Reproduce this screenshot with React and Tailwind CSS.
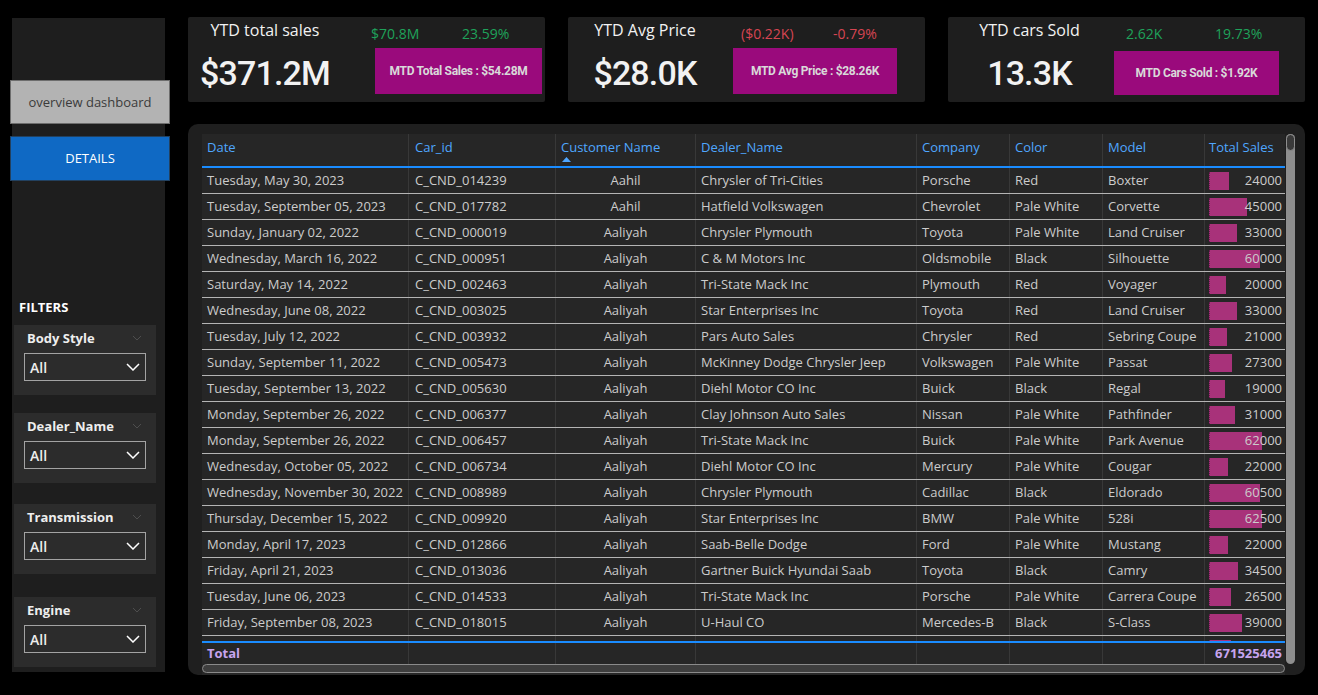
import React from "react";

const rows = [
  ["Tuesday, May 30, 2023", "C_CND_014239", "Aahil", "Chrysler of Tri-Cities", "Porsche", "Red", "Boxter", 24000],
  ["Tuesday, September 05, 2023", "C_CND_017782", "Aahil", "Hatfield Volkswagen", "Chevrolet", "Pale White", "Corvette", 45000],
  ["Sunday, January 02, 2022", "C_CND_000019", "Aaliyah", "Chrysler Plymouth", "Toyota", "Pale White", "Land Cruiser", 33000],
  ["Wednesday, March 16, 2022", "C_CND_000951", "Aaliyah", "C & M Motors Inc", "Oldsmobile", "Black", "Silhouette", 60000],
  ["Saturday, May 14, 2022", "C_CND_002463", "Aaliyah", "Tri-State Mack Inc", "Plymouth", "Red", "Voyager", 20000],
  ["Wednesday, June 08, 2022", "C_CND_003025", "Aaliyah", "Star Enterprises Inc", "Toyota", "Red", "Land Cruiser", 33000],
  ["Tuesday, July 12, 2022", "C_CND_003932", "Aaliyah", "Pars Auto Sales", "Chrysler", "Red", "Sebring Coupe", 21000],
  ["Sunday, September 11, 2022", "C_CND_005473", "Aaliyah", "McKinney Dodge Chrysler Jeep", "Volkswagen", "Pale White", "Passat", 27300],
  ["Tuesday, September 13, 2022", "C_CND_005630", "Aaliyah", "Diehl Motor CO Inc", "Buick", "Black", "Regal", 19000],
  ["Monday, September 26, 2022", "C_CND_006377", "Aaliyah", "Clay Johnson Auto Sales", "Nissan", "Pale White", "Pathfinder", 31000],
  ["Monday, September 26, 2022", "C_CND_006457", "Aaliyah", "Tri-State Mack Inc", "Buick", "Pale White", "Park Avenue", 62000],
  ["Wednesday, October 05, 2022", "C_CND_006734", "Aaliyah", "Diehl Motor CO Inc", "Mercury", "Pale White", "Cougar", 22000],
  ["Wednesday, November 30, 2022", "C_CND_008989", "Aaliyah", "Chrysler Plymouth", "Cadillac", "Black", "Eldorado", 60500],
  ["Thursday, December 15, 2022", "C_CND_009920", "Aaliyah", "Star Enterprises Inc", "BMW", "Pale White", "528i", 62500],
  ["Monday, April 17, 2023", "C_CND_012866", "Aaliyah", "Saab-Belle Dodge", "Ford", "Pale White", "Mustang", 22000],
  ["Friday, April 21, 2023", "C_CND_013036", "Aaliyah", "Gartner Buick Hyundai Saab", "Toyota", "Black", "Camry", 34500],
  ["Tuesday, June 06, 2023", "C_CND_014533", "Aaliyah", "Tri-State Mack Inc", "Porsche", "Pale White", "Carrera Coupe", 26500],
  ["Friday, September 08, 2023", "C_CND_018015", "Aaliyah", "U-Haul CO", "Mercedes-B", "Black", "S-Class", 39000],
  ["", "", "", "", "", "", "", 26000, true],
];

const SEP = "border-r border-[#383838]";

function Chevron({ className, stroke = "#ffffff", w = 14, h = 8, sw = 1.5 }) {
  return (
    <svg width={w} height={h} viewBox={`0 0 ${w} ${h}`} className={className} fill="none">
      <polyline points={`1,1 ${w / 2},${h - 1} ${w - 1},1`} stroke={stroke} strokeWidth={sw} />
    </svg>
  );
}

function Filter({ label, mt }) {
  return (
    <div className={`${mt} ml-[2px] w-[142px] h-[70px] bg-[#2c2c2c] px-[10px] shrink-0`}>
      <div className="pt-[4px] flex items-center justify-between pl-[3px] pr-[4px]">
        <span className="text-[13px] leading-[18px] font-bold text-[#eeeeee]">{label}</span>
        <Chevron w={10} h={6} stroke="#4e4e4e" sw={1} />
      </div>
      <div className="mt-[6px] w-[122px] h-[28px] border-[1.5px] border-[#a3a3a3] flex items-center justify-between pl-[5px] pr-[5px]">
        <span className="text-[14px] font-semibold text-[#ededed]">All</span>
        <Chevron />
      </div>
    </div>
  );
}

function Kpi({ title, big, n1, n2, color, box, leftW, rightMl, numPl, numW, boxW, boxH, boxMt }) {
  return (
    <div className="h-[85px] bg-[#1e1e1e] rounded-[2px] flex">
      <div className={`${leftW} flex flex-col items-center shrink-0`}>
        <div className="pt-[1px] text-[16px] leading-[24px] text-[#f2f2f2]">{title}</div>
        <div className="mt-[11px] text-[34px] leading-[40px] font-medium tracking-tight font-['Roboto',sans-serif] text-[#f2f2f2]">
          {big}
        </div>
      </div>
      <div className={`${rightMl} flex flex-col`}>
        <div className={`pt-[7px] ${numPl} flex text-[14px] leading-[20px] ${color}`}>
          <span className={numW}>{n1}</span>
          <span>{n2}</span>
        </div>
        <div
          className={`${boxMt} ${boxW} ${boxH} bg-[#9a0a7c] flex items-center justify-center text-[12px] font-bold font-['Roboto',sans-serif] tracking-tight text-[#d9d9d9]`}
        >
          {box}
        </div>
      </div>
    </div>
  );
}

function Row({ r }) {
  const w = (r[7] / 62500) * 53;
  const partial = r[8];
  return (
    <div className="flex h-[26px] border-b border-[#b4b4b4] text-[13px] leading-[25px] text-[#cccccc] shrink-0">
      <div className={`w-[207px] shrink-0 pl-[5px] whitespace-nowrap overflow-hidden ${SEP}`}>{r[0]}</div>
      <div className={`w-[147px] shrink-0 pl-[6px] whitespace-nowrap overflow-hidden ${SEP}`}>{r[1]}</div>
      <div className={`w-[140px] shrink-0 text-center whitespace-nowrap overflow-hidden ${SEP}`}>{r[2]}</div>
      <div className={`w-[221px] shrink-0 pl-[5px] whitespace-nowrap overflow-hidden ${SEP}`}>{r[3]}</div>
      <div className={`w-[93px] shrink-0 pl-[5px] whitespace-nowrap overflow-hidden ${SEP}`}>{r[4]}</div>
      <div className={`w-[93px] shrink-0 pl-[5px] whitespace-nowrap overflow-hidden ${SEP}`}>{r[5]}</div>
      <div className={`w-[102px] shrink-0 pl-[5px] whitespace-nowrap overflow-hidden ${SEP}`}>{r[6]}</div>
      <div className="relative w-[80px] shrink-0 text-right pr-[3px]">
        <div
          className="absolute left-[4px] top-[4px] h-[18px] bg-[#a8327a] border-l border-dotted border-[#6a1a4f]"
          style={{ width: `${w}px` }}
        />
        {!partial && <span className="relative">{r[7]}</span>}
      </div>
    </div>
  );
}

export default function App() {
  return (
    <div className="w-[1318px] h-[695px] bg-black flex overflow-hidden font-['Open_Sans',sans-serif]">
      {/* Sidebar */}
      <div className="ml-[12px] mt-[18px] w-[153px] h-[654px] bg-[#1e1e1e] flex flex-col shrink-0">
        <div className="mt-[62px] -ml-[2px] w-[160px] h-[44px] shrink-0 bg-[#b3b3b3] border border-[#6d6d6d] flex items-center justify-center pt-[2px] text-[13px] text-[#3b3b3b]">
          overview dashboard
        </div>
        <div className="mt-[12px] -ml-[2px] w-[160px] h-[45px] shrink-0 bg-[#0f69c4] border border-[#23415f] flex items-center justify-center text-[13px] text-white">
          DETAILS
        </div>
        <div className="mt-[117px] ml-[7px] text-[13px] font-bold leading-[18px] text-white">FILTERS</div>
        <Filter label="Body Style" mt="mt-[9px]" />
        <Filter label="Dealer_Name" mt="mt-[18px]" />
        <Filter label="Transmission" mt="mt-[21px]" />
        <Filter label="Engine" mt="mt-[23px]" />
      </div>

      {/* Main */}
      <div className="ml-[23px] mt-[17px] w-[1117px] flex flex-col shrink-0">
        <div className="grid grid-cols-3 gap-x-[23px]">
          <Kpi
            title="YTD total sales"
            big="$371.2M"
            n1="$70.8M"
            n2="23.59%"
            color="text-[#1fa25a]"
            box="MTD Total Sales : $54.28M"
            leftW="w-[154px]"
            rightMl="ml-[29px]"
            numPl="pl-0"
            numW="w-[91px]"
            boxW="w-[167px] ml-[4px]"
            boxH="h-[46px]"
            boxMt="mt-[4px]"
          />
          <Kpi
            title="YTD Avg Price"
            big="$28.0K"
            n1="($0.22K)"
            n2="-0.79%"
            color="text-[#d64552]"
            box="MTD Avg Price : $28.26K"
            leftW="w-[154px]"
            rightMl="ml-[11px]"
            numPl="pl-[8px]"
            numW="w-[92px]"
            boxW="w-[164px]"
            boxH="h-[46px]"
            boxMt="mt-[4px]"
          />
          <Kpi
            title="YTD cars Sold"
            big="13.3K"
            n1="2.62K"
            n2="19.73%"
            color="text-[#1fa25a]"
            box="MTD Cars Sold : $1.92K"
            leftW="w-[163px]"
            rightMl="ml-[3px]"
            numPl="pl-[12px]"
            numW="w-[89px]"
            boxW="w-[165px]"
            boxH="h-[44px]"
            boxMt="mt-[7px]"
          />
        </div>

        {/* Table panel */}
        <div className="mt-[22px] h-[551px] rounded-[10px] bg-[#1f1f1f] pl-[14px] pr-[10px] pt-[10px] flex">
          <div className="w-[1083px] flex flex-col bg-[#262626] shrink-0">
            {/* Header */}
            <div className="flex h-[34px] border-b-2 border-[#1a8cff] text-[13px] leading-[18px] text-[#4fa6ff] shrink-0">
              <div className={`w-[207px] shrink-0 pl-[5px] pt-[4px] ${SEP}`}>Date</div>
              <div className={`w-[147px] shrink-0 pl-[6px] pt-[4px] ${SEP}`}>Car_id</div>
              <div className={`w-[140px] shrink-0 pl-[5px] pt-[4px] ${SEP}`}>
                <div>Customer Name</div>
                <svg width="9" height="5" viewBox="0 0 9 5" className="ml-[1px] mt-[1px]">
                  <polygon points="0,5 4.5,0 9,5" fill="#4fa6ff" />
                </svg>
              </div>
              <div className={`w-[221px] shrink-0 pl-[5px] pt-[4px] ${SEP}`}>Dealer_Name</div>
              <div className={`w-[93px] shrink-0 pl-[5px] pt-[4px] ${SEP}`}>Company</div>
              <div className={`w-[93px] shrink-0 pl-[5px] pt-[4px] ${SEP}`}>Color</div>
              <div className={`w-[102px] shrink-0 pl-[5px] pt-[4px] ${SEP}`}>Model</div>
              <div className="w-[80px] shrink-0 pl-[4px] pt-[4px] whitespace-nowrap">Total Sales</div>
            </div>
            {/* Body */}
            <div className="h-[473px] overflow-hidden flex flex-col shrink-0">
              {rows.map((r, i) => (
                <Row key={i} r={r} />
              ))}
            </div>
            <div className="h-[2px] bg-[#1a8cff] shrink-0" />
            {/* Total */}
            <div className="flex h-[21px] text-[13px] leading-[21px] font-bold text-[#c7a4ef] shrink-0">
              <div className={`w-[207px] shrink-0 pl-[5px] ${SEP}`}>Total</div>
              <div className={`w-[147px] shrink-0 ${SEP}`} />
              <div className={`w-[140px] shrink-0 ${SEP}`} />
              <div className={`w-[221px] shrink-0 ${SEP}`} />
              <div className={`w-[93px] shrink-0 ${SEP}`} />
              <div className={`w-[93px] shrink-0 ${SEP}`} />
              <div className={`w-[102px] shrink-0 ${SEP}`} />
              <div className="w-[80px] shrink-0 text-right pr-[3px]">671525465</div>
            </div>
            {/* Horizontal scrollbar */}
            <div className="h-[9px] rounded-full border border-[#8a8a8a] bg-[#3e3e3e] shrink-0" />
          </div>
          {/* Vertical scrollbar */}
          <div className="ml-[1px] w-[9px] h-[530px] rounded-full bg-[#8e8e8e] flex flex-col shrink-0">
            <div className="h-[17px] rounded-full bg-[#3a3a3a] border border-[#8e8e8e]" />
          </div>
        </div>
      </div>
    </div>
  );
}
